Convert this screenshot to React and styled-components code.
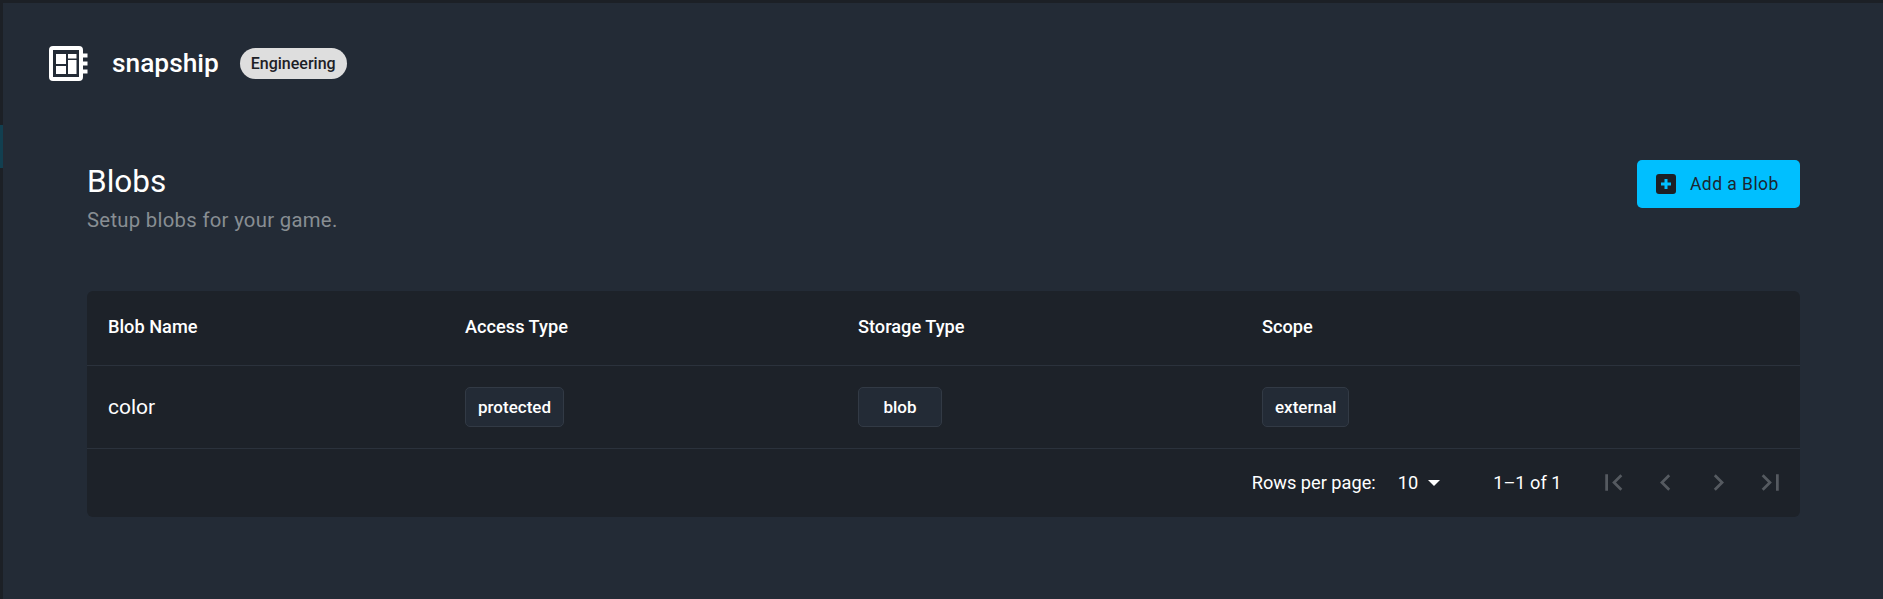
import React from 'react';
import styled, {createGlobalStyle} from 'styled-components';

const GlobalStyle = createGlobalStyle`
    html, body{
        margin: 0;
        padding: 0;
        background: #232b36;
    }
    body{
        font-family: Roboto, "Liberation Sans", sans-serif;
        color: #fff;
    }
`

const Shell = styled.div`
    height: 599px;
    display: flex;
    flex-direction: column;
    overflow: hidden;
`

const TopStrip = styled.div`
    height: 3px;
    flex: none;
    background: #1c2026;
`

const Body = styled.div`
    flex: 1;
    display: flex;
`

const Rail = styled.div`
    width: 3px;
    flex: none;
    background: #1c2026;
    padding-top: 122px;
    box-sizing: border-box;
`

const RailMarker = styled.div`
    height: 43px;
    background: #123f50;
`

const Main = styled.main`
    flex: 1;
    min-width: 0;
`

const Brand = styled.header`
    display: flex;
    align-items: center;
    height: 36px;
    padding: 43px 0 0 46px;
`

const BrandName = styled.span`
    margin-left: 24px;
    margin-top: -2px;
    font-size: 26.3px;
    font-weight: 500;
`

const TeamBadge = styled.span`
    margin-left: 21px;
    margin-top: -2px;
    height: 31px;
    padding: 0 11px;
    display: flex;
    align-items: center;
    border-radius: 16px;
    background: #dedede;
    color: #1c2026;
    font-size: 16px;
    font-weight: 500;
`

const Content = styled.section`
    padding: 78px 83px 0 84px;
`

const TitleRow = styled.div`
    display: flex;
    justify-content: space-between;
    align-items: flex-start;
`

const Title = styled.h1`
    margin: 4px 0 0;
    font-size: 31.5px;
    font-weight: 400;
    line-height: 36px;
`

const Subtitle = styled.p`
    margin: 7px 0 0;
    font-size: 20.3px;
    line-height: 26px;
    letter-spacing: 0.3px;
    color: #888e93;
`

const AddButton = styled.button`
    width: 163px;
    height: 48px;
    padding: 0 0 0 19px;
    display: flex;
    align-items: center;
    gap: 14px;
    border: 0;
    border-radius: 5px;
    background: #00bfff;
    color: #1c2630;
    font-family: inherit;
    font-size: 17.5px;
    letter-spacing: 0.45px;
`

const Card = styled.div`
    margin-top: 58px;
    border-radius: 6px;
    background: #1d2229;
`

const Row = styled.div`
    display: grid;
    grid-template-columns: 357px 393px 404px 1fr;
    align-items: center;
    height: ${props => props.$height}px;
    padding-left: 21px;
    padding-bottom: ${props => props.$lift || 0}px;
    border-bottom: 1px solid #2b323c;
    box-sizing: border-box;
`

const HeadCell = styled.div`
    font-size: 18.2px;
    font-weight: 500;
`

const NameCell = styled.div`
    font-size: 21px;
`

const Tag = styled.span`
    display: inline-flex;
    justify-content: center;
    align-items: center;
    min-width: ${props => props.$minWidth || 0}px;
    height: 40px;
    padding: 0 12px;
    box-sizing: border-box;
    border: 1px solid #323a45;
    border-radius: 5px;
    background: #232b36;
    font-size: 17px;
    font-weight: 500;
`

const Footer = styled.div`
    height: 68px;
    display: flex;
    justify-content: flex-end;
    align-items: center;
    padding-right: 13px;
    padding-bottom: 2px;
    box-sizing: border-box;
    font-size: 18.2px;
`

const RowsSelect = styled.div`
    display: flex;
    align-items: center;
    margin-left: 22px;
    gap: 10px;
`

const Caret = styled.span`
    width: 0;
    height: 0;
    border-left: 6.5px solid transparent;
    border-right: 6.5px solid transparent;
    border-top: 6.5px solid #fff;
    margin-top: 2px;
`

const PageCount = styled.span`
    margin-left: 53px;
    margin-right: 35px;
`

const PageButtons = styled.div`
    display: flex;
    gap: 19.5px;
`

const PageIcon = styled.svg`
    width: 33px;
    height: 33px;
    display: block;
    padding: 0;
    fill: #555a60;
`

const ChipIcon = () => (
    <svg width="39" height="36" viewBox="0 0 39 36" style={{display: 'block'}}>
        <rect x="2" y="2" width="30" height="31" rx="2" fill="none" stroke="#fff" strokeWidth="4"/>
        <rect x="7" y="8" width="10" height="10" fill="#fff"/>
        <rect x="7" y="20" width="10" height="8" fill="#fff"/>
        <rect x="19" y="8" width="8.5" height="4.5" fill="#fff"/>
        <rect x="19" y="14" width="8.5" height="14" fill="#fff"/>
        <rect x="34" y="7.5" width="4.5" height="4" fill="#fff"/>
        <rect x="34" y="15.5" width="4.5" height="4" fill="#fff"/>
        <rect x="34" y="23.5" width="4.5" height="4" fill="#fff"/>
    </svg>
)

const PlusIcon = () => (
    <svg width="20" height="20" viewBox="0 0 20 20" style={{display: 'block'}}>
        <rect width="20" height="20" rx="3" fill="#1c2026"/>
        <path d="M8.5 5h3v3.5H15v3h-3.5V15h-3v-3.5H5v-3h3.5z" fill="#00bfff"/>
    </svg>
)

const pagePaths = [
    'M18.41 16.59L13.82 12l4.59-4.59L17 6l-6 6 6 6zM6 6h2v12H6z',
    'M15.41 7.41L14 6l-6 6 6 6 1.41-1.41L10.83 12z',
    'M10 6L8.59 7.41 13.17 12l-4.58 4.59L10 18l6-6z',
    'M5.59 7.41L10.18 12l-4.59 4.59L7 18l6-6-6-6zM16 6h2v12h-2z',
]

const columns = ['Blob Name', 'Access Type', 'Storage Type', 'Scope']

const App = () => {
    return(
        <Shell>
            <GlobalStyle/>
            <TopStrip/>
            <Body>
                <Rail><RailMarker/></Rail>
                <Main>
                    <Brand>
                        <ChipIcon/>
                        <BrandName>snapship</BrandName>
                        <TeamBadge>Engineering</TeamBadge>
                    </Brand>
                    <Content>
                        <TitleRow>
                            <div>
                                <Title>Blobs</Title>
                                <Subtitle>Setup blobs for your game.</Subtitle>
                            </div>
                            <AddButton><PlusIcon/>Add a Blob</AddButton>
                        </TitleRow>
                        <Card>
                            <Row $height={75} $lift={3}>
                                {columns.map(col => <HeadCell key={col}>{col}</HeadCell>)}
                            </Row>
                            <Row $height={83}>
                                <NameCell>color</NameCell>
                                <div><Tag>protected</Tag></div>
                                <div><Tag $minWidth={84}>blob</Tag></div>
                                <div><Tag>external</Tag></div>
                            </Row>
                            <Footer>
                                <span>Rows per page:</span>
                                <RowsSelect>10 <Caret/></RowsSelect>
                                <PageCount>1–1 of 1</PageCount>
                                <PageButtons>
                                    {pagePaths.map(d => (
                                        <PageIcon key={d} viewBox="0 0 24 24"><path d={d}/></PageIcon>
                                    ))}
                                </PageButtons>
                            </Footer>
                        </Card>
                    </Content>
                </Main>
            </Body>
        </Shell>
    )
}

export default App
